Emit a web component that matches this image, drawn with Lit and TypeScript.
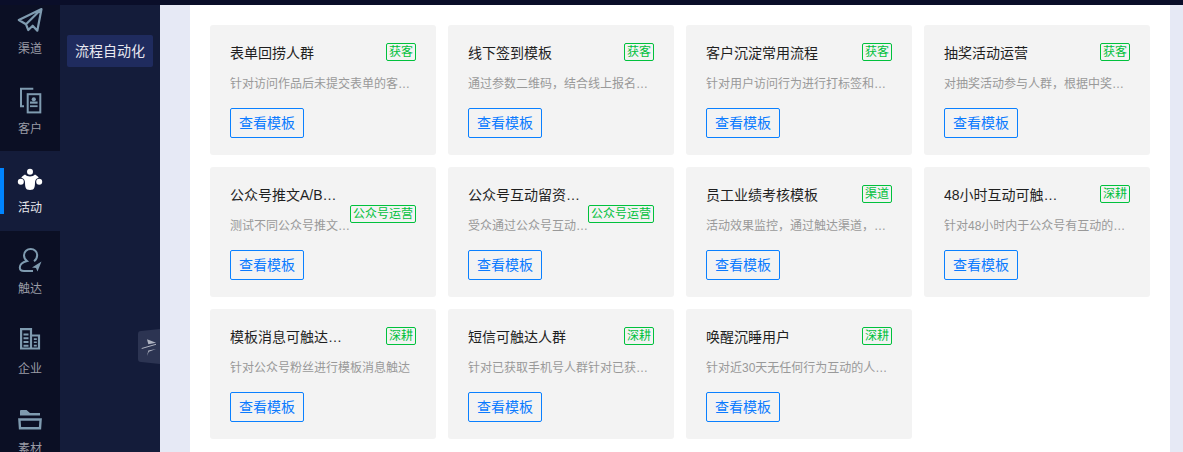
import { LitElement, html, css, svg } from "lit";
import { customElement } from "lit/decorators.js";

const cards: [string, string, string][] = [
  ["表单回捞人群", "获客", "针对访问作品后未提交表单的客户进行回捞运营"],
  ["线下签到模板", "获客", "通过参数二维码，结合线上报名数据进行线下签到"],
  ["客户沉淀常用流程", "获客", "针对用户访问行为进行打标签和客户沉淀运营流程"],
  ["抽奖活动运营", "获客", "对抽奖活动参与人群，根据中奖情况进行后续运营"],
  ["公众号推文A/B测试模板", "公众号运营", "测试不同公众号推文的效果并进行选择"],
  ["公众号互动留资模板", "公众号运营", "受众通过公众号互动后留下资料的流程"],
  ["员工业绩考核模板", "渠道", "活动效果监控，通过触达渠道，进行员工考核"],
  ["48小时互动可触达人群", "深耕", "针对48小时内于公众号有互动的粉丝进行触达"],
  ["模板消息可触达人群", "深耕", "针对公众号粉丝进行模板消息触达"],
  ["短信可触达人群", "深耕", "针对已获取手机号人群针对已获取手机号人群"],
  ["唤醒沉睡用户", "深耕", "针对近30天无任何行为互动的人群进行唤醒"],
];

const icons: Record<string, unknown> = {
  plane: svg`<path d="M23.5 1 .8 12l7.200 4.300 2.300 5.700 4.400-4.300 4.600 5z M23.500 1 8 16.300" fill="none" stroke="currentColor" stroke-width="2.200" stroke-linejoin="round"/>`,
  users: svg`<path d="M15.300 .8H3v17.500h3" fill="none" stroke="currentColor" stroke-width="2"/><rect x="9.700" y="6.200" width="12.600" height="18.200" fill="none" stroke="currentColor" stroke-width="2"/><circle cx="15.800" cy="11.300" r="2.100" fill="currentColor"/><rect x="12" y="13.500" width="7.600" height="2.200" fill="currentColor"/><rect x="12" y="17.300" width="7.600" height="1.800" fill="currentColor"/>`,
  activity: svg`<circle cx="12" cy="2.800" r="3" fill="currentColor"/><circle cx="2.800" cy="12.800" r="3" fill="currentColor"/><circle cx="21.200" cy="12.800" r="3" fill="currentColor"/><path d="M7 5.500C9 8 15 8 17 5.500 18.500 6.200 20 7.500 20.700 8.800 18 9.500 17 11.500 17 13.500 17 17 16.500 19.500 15 20.500 13 21 11 21 9 20.500 7.500 19.500 7 17 7 13.500 7 11.500 6 9.500 3.300 8.800 4 7.500 5.500 6.200 7 5.500Z" fill="currentColor"/>`,
  reach: svg`<path d="M16 13.200C18 11.800 19.200 9.500 19.200 7 19.200 3.400 16.300 1 12.700 1S6 3.600 6 7.200C6 9.500 7 11.500 9 13 5 14.200 1.800 16 1.800 19.500 1.800 22 4 23 6 23H15" fill="none" stroke="currentColor" stroke-width="2"/><path d="M23.500 13.500 14 19.500l4 .500 1.500 3.500z" fill="currentColor"/>`,
  corp: svg`<path d="M3.100 1.200H13V20.500H3.100zM13 7.500H21V20.500H13z" fill="none" stroke="currentColor" stroke-width="2.200"/><path d="M5.500 5.500h5v2h-5zM5.500 9.300h5v2h-5zM5.500 13.100h5v2h-5zM5.500 16.700h5v2h-5zM15.800 10.300h3v1.600h-3zM15.800 13.500h3v1.600h-3zM15.800 16.800h3v1.600h-3z" fill="currentColor"/>`,
  folder: svg`<path d="M1.400 11.500H22.600L22 20.300H2z" fill="none" stroke="currentColor" stroke-width="2.400"/><path d="M2 7.500V3Q2 2 3 2H8.500L12 5H22V7.500z" fill="currentColor"/>`,
};

const nav = [
  ["plane", "渠道"],
  ["users", "客户"],
  ["activity", "活动"],
  ["reach", "触达"],
  ["corp", "企业"],
  ["folder", "素材"],
];

@customElement("app-root")
export class AppRoot extends LitElement {
  static styles = css`
    :host {
      display: block;
      width: 1183px;
      height: 452px;
      overflow: hidden;
      font-family: "Liberation Sans", "Noto Sans CJK SC", sans-serif;
      background: #e6e9f5;
    }
    .top { height: 5px; background: #0a0e29; }
    .body { display: flex; height: 447px; }
    .rail { width: 60px; flex: none; overflow: hidden; background: #141c3a; }
    .rail-list { margin-top: -14px; display: flex; flex-direction: column; }
    .item {
      height: 80px;
      box-sizing: border-box;
      padding-top: 17px;
      display: flex;
      flex-direction: column;
      align-items: center;
      background: #0b0f24;
      color: #7f9bb0;
      font-size: 12px;
      line-height: 17px;
      position: relative;
    }
    .item span { color: #9a9ca6; margin-top: 9px; }
    .item svg { display: block; width: 24px; height: 24px; overflow: visible; flex: none; }
    .item.on { background: #141c3a; color: #fff; padding-top: 18px; }
    .item.on span { color: #e6e6ea; margin-top: 7px; }
    .item.on::before {
      content: "";
      position: absolute;
      left: 0;
      top: 17px;
      width: 4px;
      height: 46px;
      background: #0084ff;
    }
    .side {
      width: 100px;
      flex: none;
      box-sizing: border-box;
      padding: 30px 7px 0;
      background: #141c3a;
      position: relative;
    }
    .sub {
      height: 32px;
      line-height: 32px;
      text-align: center;
      background: #1f2b5e;
      border-radius: 2px;
      color: #e8e8f0;
      font-size: 14px;
    }
    .fold { position: absolute; right: 0; top: 324px; width: 22px; height: 35px; display: block; }
    .main { flex: 1; padding: 0 13px 0 30px; min-width: 0; }
    .panel {
      height: 100%;
      background: #fff;
      box-sizing: border-box;
      padding: 20px 20px 0;
      display: grid;
      grid-template-columns: repeat(4, 226px);
      grid-auto-rows: 130px;
      gap: 12px;
    }
    .card {
      background: #f3f3f3;
      border-radius: 3px;
      padding: 18px 20px 0;
    }
    .head { height: 20px; }
    .title {
      float: left;
      width: 118px;
      margin-right: 6px;
      font-size: 14px;
      line-height: 20px;
      color: #1f1f1f;
      white-space: nowrap;
      overflow: hidden;
      text-overflow: ellipsis;
    }
    .tag {
      float: right;
      box-sizing: border-box;
      height: 18px;
      line-height: 16px;
      margin-left: -2px;
      padding: 0 2px;
      font-size: 12px;
      border: 1px solid #00c13c;
      border-radius: 2px;
      color: #00c13c;
    }
    .desc {
      margin-top: 11px;
      font-size: 12px;
      line-height: 20px;
      color: #999;
      white-space: nowrap;
      overflow: hidden;
      text-overflow: ellipsis;
    }
    .btn {
      display: block;
      box-sizing: border-box;
      margin-top: 14px;
      width: 74px;
      height: 30px;
      padding: 0;
      background: transparent;
      border: 1px solid #0a80ff;
      border-radius: 2px;
      color: #0a7aff;
      font: inherit;
      font-size: 14px;
      line-height: 28px;
    }
  `;

  render() {
    return html`
      <div class="top"></div>
      <div class="body">
        <nav class="rail">
          <div class="rail-list">
            ${nav.map(
              ([icon, label]) => html`
                <div class="item ${label === "活动" ? "on" : ""}">
                  <svg viewBox="0 0 24 24">${icons[icon]}</svg>
                  <span>${label}</span>
                </div>
              `
            )}
          </div>
        </nav>
        <aside class="side">
          <div class="sub">流程自动化</div>
          <svg class="fold" viewBox="0 0 22 35">
            <path d="M22 0 3 2a3 3 0 0 0-3 3v25a3 3 0 0 0 3 3l19 2z" fill="#2c3452"/>
            <path d="M9 10.300 18 13.800 10.300 15.300z" fill="#aeb2c0"/>
            <path d="M3.700 19.500 18 15.300" stroke="#aeb2c0" stroke-width="1" fill="none"/>
            <path d="M10.300 21.500 18 20 10.800 22.800 9 27z" fill="#aeb2c0"/>
          </svg>
        </aside>
        <main class="main">
          <div class="panel">
            ${cards.map(
              ([t, tag, d]) => html`
                <div class="card">
                  <div class="head">
                    <div class="title">${t}</div>
                    <div class="tag">${tag}</div>
                  </div>
                  <div class="desc">${d}</div>
                  <button class="btn">查看模板</button>
                </div>
              `
            )}
          </div>
        </main>
      </div>
    `;
  }
}
